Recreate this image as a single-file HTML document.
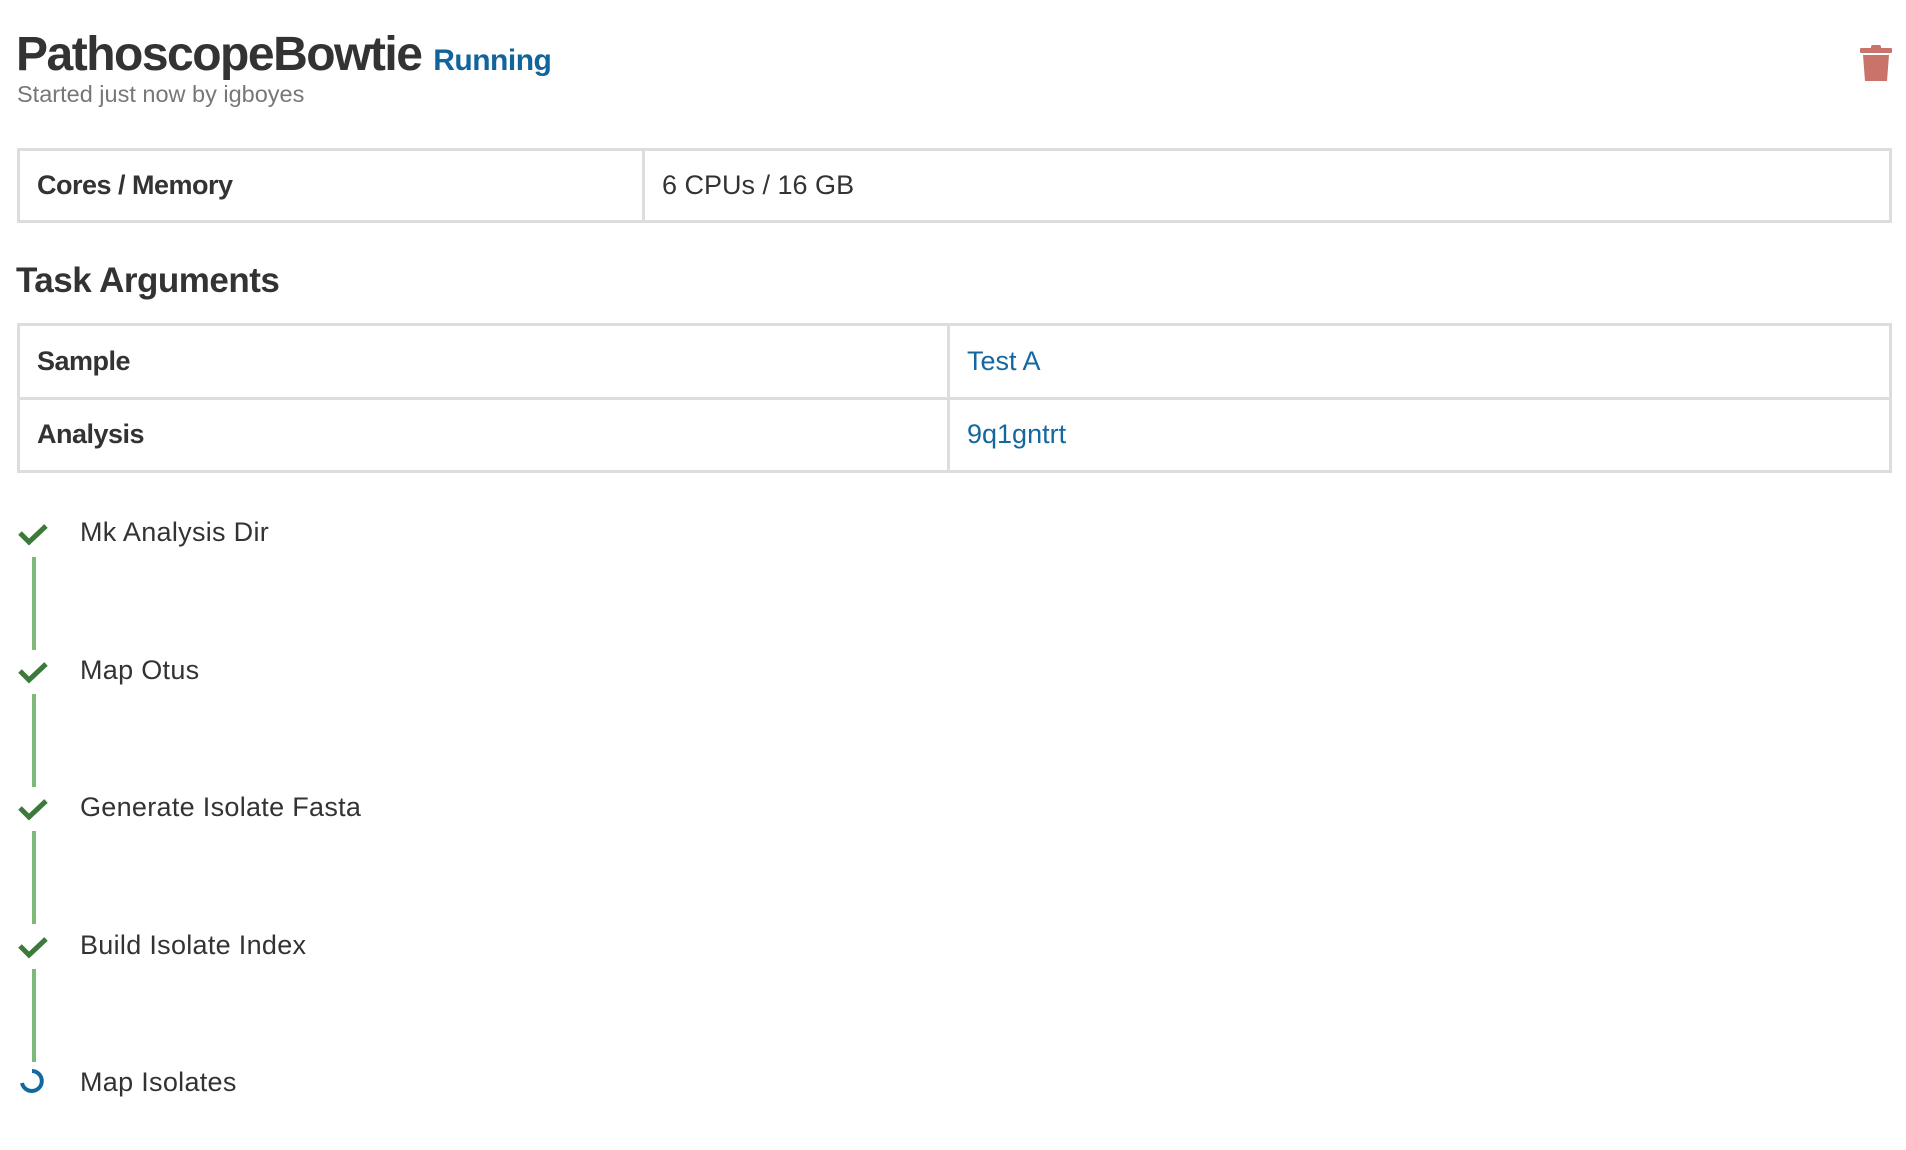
<!DOCTYPE html>
<html><head><meta charset="utf-8"><style>
body{margin:0;background:#fff;font-family:"Liberation Sans",sans-serif;color:#333;width:1906px;height:1150px;overflow:hidden;position:relative}
.a{position:absolute;white-space:nowrap}
table{position:absolute;border-collapse:collapse;left:17px;width:1875px}
td{border:3px solid #ddd;font-size:27px;padding:0 0 0 17px;color:#333}
td.k{font-weight:bold;letter-spacing:-0.5px}
.link{color:#1468a0}
.step{position:absolute;left:80px;font-size:27px;color:#333;letter-spacing:0.3px;line-height:30px}
.vl{position:absolute;left:32px;width:4px;background:#7dba79}
</style></head><body>
<div class="a" style="left:16px;top:27px;font-size:48px;font-weight:bold;letter-spacing:-1.5px;color:#333">PathoscopeBowtie <span style="font-size:30px;color:#11649c;letter-spacing:-0.5px">Running</span></div>
<div class="a" style="left:17px;top:81px;font-size:23.5px;color:#777">Started just now by igboyes</div>
<svg class="a" style="left:1859px;top:44px" width="34" height="38" viewBox="0 0 34 38"><rect x="1" y="4" width="32" height="5" rx="1" fill="#c9736a"/><rect x="12" y="1" width="10" height="5" rx="2" fill="#c9736a"/><path d="M4 11H30L28 37H6Z" fill="#c9736a"/></svg>
<table style="top:148px;height:75px"><tr><td class="k" style="width:605px">Cores / Memory</td><td>6 CPUs / 16 GB</td></tr></table>
<div class="a" style="left:16px;top:261px;font-size:35px;font-weight:bold;letter-spacing:-0.5px">Task Arguments</div>
<table style="top:323px;height:150px"><tr><td class="k" style="width:910px">Sample</td><td class="link">Test A</td></tr><tr><td class="k">Analysis</td><td class="link">9q1gntrt</td></tr></table>
<svg class="a" style="left:18px;top:521px" width="32" height="590" viewBox="0 0 32 590">
<g fill="none" stroke="#3b7a3b" stroke-width="5"><path d="M2 12L11 21L28 5"/><path d="M2 150L11 159L28 143"/><path d="M2 287L11 296L28 280"/><path d="M2 425L11 434L28 418"/></g>
<path d="M14 550A10 10 0 1 1 4 562" fill="none" stroke="#1468a0" stroke-width="4"/>
</svg>
<div class="vl" style="top:557px;height:93px"></div>
<div class="vl" style="top:694px;height:93px"></div>
<div class="vl" style="top:831px;height:93px"></div>
<div class="vl" style="top:969px;height:93px"></div>
<div class="step" style="top:517px">Mk Analysis Dir</div>
<div class="step" style="top:655px">Map Otus</div>
<div class="step" style="top:792px">Generate Isolate Fasta</div>
<div class="step" style="top:930px">Build Isolate Index</div>
<div class="step" style="top:1067px">Map Isolates</div>
</body></html>
